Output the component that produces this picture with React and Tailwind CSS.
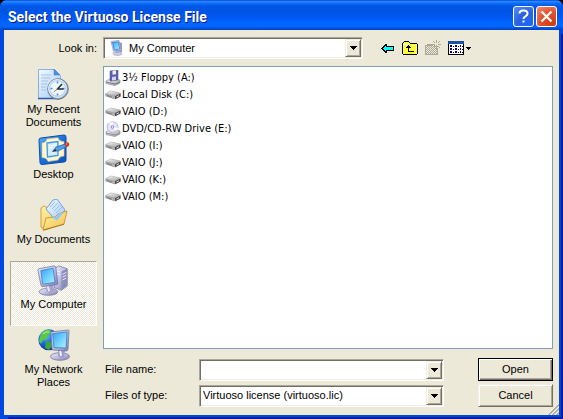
import React from "react";

const UI = "font-['Liberation_Sans',Arial,sans-serif] text-[11px] leading-[13px]";
const LIST = "font-['DejaVu_Sans_Condensed','DejaVu_Sans',Tahoma,sans-serif] text-[11px] leading-[17px]";

function Gradients() {
  return (
    <svg width="0" height="0" className="absolute" aria-hidden="true">
      <defs>
        <linearGradient id="screen" x1="0" y1="0" x2="1" y2="1">
          <stop offset="0" stopColor="#3c9cf4" />
          <stop offset="0.5" stopColor="#6cd0ff" />
          <stop offset="1" stopColor="#b8f0ff" />
        </linearGradient>
        <linearGradient id="case" x1="0" y1="0" x2="1" y2="1">
          <stop offset="0" stopColor="#eeeefc" />
          <stop offset="0.5" stopColor="#bcbce0" />
          <stop offset="1" stopColor="#7c7cb0" />
        </linearGradient>
        <linearGradient id="paper" x1="0" y1="0" x2="1" y2="1">
          <stop offset="0" stopColor="#f4faff" />
          <stop offset="1" stopColor="#a4c8f4" />
        </linearGradient>
        <linearGradient id="folder" x1="0" y1="0" x2="1" y2="1">
          <stop offset="0" stopColor="#fff4a8" />
          <stop offset="1" stopColor="#f4c048" />
        </linearGradient>
        <linearGradient id="frame" x1="0" y1="0" x2="1" y2="1">
          <stop offset="0" stopColor="#58b0f8" />
          <stop offset="0.5" stopColor="#1c70dc" />
          <stop offset="1" stopColor="#0a50b8" />
        </linearGradient>
        <radialGradient id="globe" cx="0.35" cy="0.3" r="0.75">
          <stop offset="0" stopColor="#70c0ff" />
          <stop offset="0.5" stopColor="#1c68e0" />
          <stop offset="1" stopColor="#0a2890" />
        </radialGradient>
        <linearGradient id="metal" x1="0" y1="0" x2="1" y2="1">
          <stop offset="0" stopColor="#fafafa" />
          <stop offset="1" stopColor="#a0a0a0" />
        </linearGradient>
      </defs>
    </svg>
  );
}

function RecentIcon() {
  return (
    <svg width="32" height="32" viewBox="0 0 32 32" aria-hidden="true">
      <path d="M0.500 0.500h16l6 6v23h-22z" fill="url(#paper)" stroke="#8cb0e4" />
      <path d="M0 29.500h22" stroke="#2c58a8" strokeWidth="1.500" />
      <path d="M16 0l6 6h-6z" fill="#4a90e8" stroke="#3c78d0" strokeWidth="0.5" />
      <path d="M3 6h10M3 9h9M3 12h7M3 15h6M3 18h5M3 21h5" stroke="#a4c4f0" />
      <circle cx="20" cy="20" r="10.300" fill="#8ca4bc" stroke="#6c8098" />
      <circle cx="19.500" cy="19.500" r="9" fill="#b8d0e8" stroke="#e8f0f8" />
      <circle cx="19.500" cy="19.500" r="7.300" fill="#eef8ff" />
      <path d="M19.500 12.500v2M19.500 24.500v2M12.500 19.500h2M24.500 19.500h2" stroke="#3890e0" strokeWidth="1.500" />
      <path d="M24 15l-4.500 5h6" stroke="#202838" strokeWidth="1.500" fill="none" />
      <path d="M19.500 20l-4 3" stroke="#e87828" />
    </svg>
  );
}

function DesktopIcon() {
  return (
    <svg width="32" height="32" viewBox="0 0 32 32" aria-hidden="true">
      <path d="M3 4l23-3q2 0 2 2v23q0 2-2 2L4 30.500q-2 0-2-2L1 6q0-2 2-2z" fill="url(#frame)" stroke="#0a50a8" />
      <path d="M4 9q4 0 5-4l11-1.300q1 4 6 4V22q-5 0-6 4L10 27.500q-1-4-6-4z" fill="#fff6cc" stroke="#e8c878" strokeWidth="0.6" />
      <path d="M9 9l11-1.500v14L9.500 23z" fill="#d4ecff" stroke="#3c98e8" strokeWidth="1.300" />
      <path d="M11 12l7-1M11 14l4-0.500" stroke="#fff" />
      <path d="M15 17l3-4 9-3 2 2.500-9 4.500z" fill="#4ca0ec" stroke="#1c58a8" strokeWidth="0.7" />
      <path d="M13.500 18l4-3 1 2z" fill="#303030" />
      <circle cx="29" cy="10.500" r="2.200" fill="#d03818" />
      <circle cx="28.500" cy="10" r="0.700" fill="#ff9878" />
    </svg>
  );
}

function DocumentsIcon() {
  return (
    <svg width="32" height="32" viewBox="0 0 32 32" aria-hidden="true">
      <path d="M3 9l3-2 4 2 2 3 14-1v13L7 31l-4-3z" fill="url(#folder)" stroke="#c88c20" strokeWidth="0.8" />
      <path d="M8 10L15 1l4-1 8 11-9 11z" fill="url(#paper)" stroke="#6ca4e4" />
      <path d="M12 8l5-5M14 10l6-6M16 12l6-6M18 14l6-6" stroke="#94c0f4" />
      <path d="M5 31l3-12 9-1 3-3 9-3-3 13z" fill="url(#folder)" stroke="#c88c20" strokeWidth="0.8" />
      <path d="M14 18.500l4-1 3-2.700 5-1.500-7 8.500z" fill="#94c8f8" />
      <path d="M5 31.300l21-6" stroke="#a06c10" strokeWidth="0.7" />
    </svg>
  );
}

function ComputerIcon() {
  return (
    <svg width="34" height="32" viewBox="0 -2 34 34" aria-hidden="true">
      <path d="M17 3l5-3 9 3v18l-6 5-8-3z" fill="url(#case)" stroke="#7272a0" strokeWidth="0.8" />
      <path d="M25 6l6-3v18l-6 5z" fill="#8c8cbc" />
      <path d="M19 5l5 1.500M19 8l5 1.500M26 9l4-2M26 12l4-2M26 15l4-2" stroke="#f4f4ff" />
      <circle cx="27.500" cy="18" r="1" fill="#50d050" />
      <ellipse cx="11" cy="27.500" rx="10" ry="3.800" fill="url(#case)" stroke="#7878a0" strokeWidth="0.8" />
      <path d="M8 20l8-1 1 8q-4 3-8 0z" fill="#a4a4cc" />
      <path d="M10 21l2 6" stroke="#ececff" strokeWidth="2" />
      <path d="M1 3l16-3q2 0 2 2l2 16q0 2-2 2L5 22q-2 0-2-2L0 5q0-2 1-2z" fill="url(#case)" stroke="#7272a0" strokeWidth="0.8" />
      <path d="M3 5l13-2.500 2 15L5 19.500z" fill="url(#screen)" stroke="#2c74c8" strokeWidth="0.7" />
    </svg>
  );
}

function NetworkIcon() {
  return (
    <svg width="32" height="32" viewBox="0 0 32 32" aria-hidden="true">
      <circle cx="10.800" cy="10.800" r="10.500" fill="url(#globe)" />
      <path d="M3 5q4-5 9-4l2 3-4 2-1 4-4 1-2 4-2-3z" fill="#58c848" />
      <path d="M8 12l5 1 1 4-3 4-4-2z" fill="#38a838" />
      <path d="M5 5l3-2 3 0" stroke="#c0f0a0" fill="none" />
      <ellipse cx="22" cy="27.500" rx="9.500" ry="3.800" fill="url(#case)" stroke="#7878a0" strokeWidth="0.8" />
      <path d="M20 19l7 1-1 8q-4 2-6-1z" fill="#9c9cc8" />
      <path d="M22 20l1 7" stroke="#f0f0ff" strokeWidth="2" />
      <path d="M13 3l17-2q1 0 1 1l-1 18q0 2-2 2l-13-1q-1 0-1-1z" fill="url(#case)" stroke="#6c78a0" strokeWidth="0.8" />
      <path d="M14.500 4.500L29 3l-1 16-12-0.500z" fill="url(#screen)" stroke="#2c74c8" strokeWidth="0.7" />
    </svg>
  );
}

function SmallComputerIcon() {
  return (
    <svg width="16" height="16" viewBox="0 0 16 16" aria-hidden="true" className="shrink-0">
      <path d="M10 2l3 1v9l-3 2z" fill="#9c9cc4" />
      <ellipse cx="8.500" cy="13.500" rx="4.500" ry="1.900" fill="#d0d0e4" stroke="#9494b4" strokeWidth="0.6" />
      <path d="M6 10h4v3H7z" fill="#a8a8cc" />
      <path d="M2 1.500L10 0.500 12 10 4.500 11z" fill="#e4e4f6" stroke="#8c94c0" strokeWidth="0.8" />
      <path d="M3.500 2.500L9.200 1.800 10.800 9 5.300 9.800z" fill="url(#screen)" stroke="#2070d0" strokeWidth="0.7" />
    </svg>
  );
}

function DiskIcon() {
  return (
    <svg width="16" height="16" viewBox="0 1 16 16" aria-hidden="true">
      <path d="M0.500 7.500L6 5l9.500 2v3.500L10 13.300 0.500 10z" fill="#8c8c8c" />
      <path d="M0.500 7.500L6 4.800l9.500 2.400L10 10z" fill="url(#metal)" stroke="#b4b4b4" strokeWidth="0.5" />
      <path d="M0.500 8L10 10.500v2.800L0.500 10.200z" fill="#b0b0b0" />
      <path d="M10 10.300l5.500-2.900v3L10 13.300z" fill="#484848" />
      <path d="M2 9.500l5 1.700" stroke="#787878" />
      <path d="M11.500 11l2.500-1.300" stroke="#d8e8d8" />
    </svg>
  );
}

function FloppyIcon() {
  return (
    <svg width="16" height="16" viewBox="0 0 16 16" aria-hidden="true">
      <path d="M1 11l4-2 10 1v3l-5 2.500L1 13.500z" fill="url(#metal)" stroke="#808080" strokeWidth="0.6" />
      <path d="M1 12l9 2 5-2" stroke="#787878" fill="none" />
      <path d="M5 1l8-1v10l-8 1z" fill="#5c60b4" stroke="#44488c" strokeWidth="0.5" />
      <path d="M7.500 0.700l3.500-0.400v4l-3.500 0.500z" fill="#f0f0fc" />
      <path d="M7 7l4-0.500v3.500l-4 0.500z" fill="#d0d4f0" />
      <rect x="12" y="12" width="1" height="1" fill="#40c040" />
    </svg>
  );
}

function DvdIcon() {
  return (
    <svg width="16" height="16" viewBox="0 0 16 16" aria-hidden="true">
      <path d="M1 11l4-2.500 10 1.500v3l-5 2.500-9-2z" fill="url(#metal)" stroke="#808080" strokeWidth="0.6" />
      <path d="M1 12l9 2 5-2" stroke="#909090" fill="none" />
      <ellipse cx="7.500" cy="6" rx="5.500" ry="5.300" fill="#e4e4f8" stroke="#a4a4c4" strokeWidth="0.7" />
      <path d="M7.500 6L4 1.800A5.500 5 0 0 1 8 1zM7.500 6l3.500 4a5.500 5 0 0 0 2-3z" fill="#fff" />
      <circle cx="7.500" cy="6" r="1.700" fill="#8c8ce4" />
      <circle cx="7.500" cy="6" r="0.7" fill="#fff" />
    </svg>
  );
}

const SUNKEN =
  "flex bg-white border border-t-[#aca899] border-l-[#aca899] border-b-white border-r-white shadow-[inset_1px_1px_0_#716f64,inset_-1px_-1px_0_#f1efe2]";
const RAISED =
  "bg-[#ece9d8] border border-t-[#f1efe2] border-l-[#f1efe2] border-b-[#716f64] border-r-[#716f64] shadow-[inset_1px_1px_0_#fff,inset_-1px_-1px_0_#aca899]";

function Arrow() {
  return (
    <svg width="7" height="4" viewBox="0 0 7 4" shapeRendering="crispEdges" aria-hidden="true">
      <path d="M0 0h7v1H0zM1 1h5v1H1zM2 2h3v1H2zM3 3h1v1H3z" fill="#000" />
    </svg>
  );
}

function ArrowBox() {
  return (
    <span className={`pointer-events-none col-start-2 row-start-1 flex items-center justify-center ${RAISED}`}>
      <Arrow />
    </span>
  );
}

function SelectBox({ id, option, icon, className }) {
  return (
    <div className={`${SUNKEN} h-[22px] p-px ${className}`}>
      <div className="grid min-w-0 flex-1 grid-cols-[1fr_16px] items-stretch">
        <div className="col-span-2 col-start-1 row-start-1 flex min-w-0 items-center">
          {icon}
          <select id={id} className={`h-full min-w-0 flex-1 appearance-none bg-transparent px-0.5 text-black outline-none ${icon ? "ml-0.5" : ""}`}>
            <option>{option}</option>
          </select>
        </div>
        <ArrowBox />
      </div>
    </div>
  );
}

const places = [
  { lines: ["My Recent", "Documents"], Icon: RecentIcon },
  { lines: ["Desktop"], Icon: DesktopIcon },
  { lines: ["My Documents"], Icon: DocumentsIcon },
  { lines: ["My Computer"], Icon: ComputerIcon, active: true },
  { lines: ["My Network", "Places"], Icon: NetworkIcon },
];

const drives = [
  { name: "3½ Floppy (A:)", Icon: FloppyIcon },
  { name: "Local Disk (C:)", Icon: DiskIcon },
  { name: "VAIO (D:)", Icon: DiskIcon },
  { name: "DVD/CD-RW Drive (E:)", Icon: DvdIcon },
  { name: "VAIO (I:)", Icon: DiskIcon },
  { name: "VAIO (J:)", Icon: DiskIcon },
  { name: "VAIO (K:)", Icon: DiskIcon },
  { name: "VAIO (M:)", Icon: DiskIcon },
];

function TitleBar() {
  return (
    <header className="flex h-[30px] shrink-0 items-center gap-0.5 rounded-t-[7px] bg-[linear-gradient(180deg,#0048d8_0%,#2a86ff_5%,#0a6cf8_12%,#0058e8_20%,#0054e3_35%,#0058f0_56%,#0066ff_76%,#0066ff_88%,#004fd8_95%,#0040c0_100%)] pt-[3px] pr-1.5 pl-2">
      <h1 className="min-w-0 flex-1 truncate font-['Roboto','Noto_Sans',sans-serif] text-[14px] leading-[20px] font-bold text-white [text-shadow:1px_1px_0_#0a1883]">
        Select the Virtuoso License File
      </h1>
      <button type="button" aria-label="Help" className="flex size-[21px] items-center justify-center rounded-[3px] border border-white bg-[radial-gradient(circle_at_80%_90%,#1c68f8_0%,#2c62e0_50%,#5c8cf0_100%)]">
        <svg width="15" height="15" viewBox="0 0 15 15" aria-hidden="true">
          <path d="M3.500 4.500q0-3 4-3t4 3q0 1.500-2 2.800-2 1-2 2.700" fill="none" stroke="#fff" strokeWidth="2" />
          <path d="M6.500 11.500h2v2h-2z" fill="#fff" />
        </svg>
      </button>
      <button type="button" aria-label="Close" className="flex size-[21px] items-center justify-center rounded-[3px] border border-white bg-[radial-gradient(circle_at_80%_90%,#d03c10_0%,#e0502c_50%,#f08c70_100%)]">
        <svg width="15" height="15" viewBox="0 0 15 15" aria-hidden="true">
          <path d="M2.500 2.500l10 10M12.500 2.500l-10 10" stroke="#fff" strokeWidth="2.200" />
        </svg>
      </button>
    </header>
  );
}

function Toolbar() {
  return (
    <div className="flex items-center gap-[7px]">
      <button type="button" aria-label="Back" className="flex size-4 items-center justify-center">
        <svg width="13" height="9" viewBox="0 0 13 9" shapeRendering="crispEdges" aria-hidden="true">
          <path d="M4 0h2v2h7v5H6v2H4V8H3V7H2V6H1V5H0V4h1V3h1V2h1V1h1z" fill="#000" />
          <path d="M4 2h1v1h7v3H5v1H4V6H3V5H2V4h1V3h1z" fill="#00ffff" />
        </svg>
      </button>
      <button type="button" aria-label="Up one level" className="flex size-4 items-center justify-center">
        <svg width="16" height="14" viewBox="0 0 16 14" shapeRendering="crispEdges" aria-hidden="true">
          <path d="M2 0h5v1h1v1h7v1h1v10h-1v1H1v-1H0V2h1V1h1z" fill="#000" />
          <path d="M2 1h5v1h1v1h7v10H1V2h1z" fill="#ffff40" />
          <path d="M1 3h6v1H1z" fill="#fff" />
          <path d="M6 4h1v1h1v1h1v1H7v3h5v1H6V7H4V6h1V5h1z" fill="#000" />
        </svg>
      </button>
      <button type="button" aria-label="Create new folder" disabled className="flex size-4 items-center justify-center">
        <svg width="16" height="16" viewBox="0 0 16 16" shapeRendering="crispEdges" aria-hidden="true">
          <defs>
            <pattern id="dither" width="2" height="2" patternUnits="userSpaceOnUse">
              <path d="M0 0h1v1H0zM1 1h1v1H1z" fill="#aca899" />
            </pattern>
          </defs>
          <path d="M1 5h2V4h4v1h6v10H1z" fill="url(#dither)" />
          <path d="M0 5h1v10H0zM0 14h12v1H0zM12 8h1v7h-1zM1 5h6v1H1zM2 4h4v1H2z" fill="#aca899" />
          <path d="M11 0h1v3h-1zM11 6h1v3h-1zM7 4h3v1H7zM13 4h3v1h-3zM8 1h1v1H8zM9 2h1v1H9zM14 1h1v1h-1zM13 2h1v1h-1zM14 7h1v1h-1zM13 6h1v1h-1zM9 6h1v1H9z" fill="#aca899" />
        </svg>
      </button>
      <button type="button" aria-label="View menu" className="flex h-4 items-center gap-0.5">
        <svg width="16" height="14" viewBox="0 0 16 14" shapeRendering="crispEdges" aria-hidden="true">
          <path d="M0 0h16v14H0z" fill="#000" />
          <path d="M0 0h16v3H0z" fill="#1c50a8" />
          <path d="M1 3h14v10H1z" fill="#fff" />
          <path d="M2 4h2v2H2zM7 4h2v2H7zM12 4h1v2h-1zM2 7h2v2H2zM7 7h2v2H7zM12 7h1v2h-1zM2 10h2v2H2zM7 10h2v2H7zM12 10h1v2h-1z" fill="#000080" />
          <path d="M5 5h1v1H5zM10 5h1v1h-1zM14 5h1v1h-1zM5 8h1v1H5zM10 8h1v1h-1zM14 8h1v1h-1zM5 11h1v1H5zM10 11h1v1h-1zM14 11h1v1h-1z" fill="#000" />
        </svg>
        <svg width="5" height="3" viewBox="0 0 5 3" shapeRendering="crispEdges" aria-hidden="true">
          <path d="M0 0h5v1H0zM1 1h3v1H1zM2 2h1v1H2z" fill="#000" />
        </svg>
      </button>
    </div>
  );
}

function PlacesBar() {
  return (
    <nav aria-label="Places" className="flex flex-col">
      {places.map(({ lines, Icon, active }) => (
        <button
          key={lines[0]}
          type="button"
          aria-pressed={!!active}
          className={`flex h-[65px] flex-col items-center border pt-0.5 text-center ${
            active
              ? "border-t-[#aca899] border-r-white border-b-white border-l-[#aca899] bg-[repeating-conic-gradient(#ffffff_0_25%,#ece9d8_0_50%)] bg-[length:2px_2px]"
              : "border-transparent"
          }`}
        >
          <span className="mb-0.5 shrink-0"><Icon /></span>
          {lines.map((line) => (
            <span key={line}>{line}</span>
          ))}
        </button>
      ))}
    </nav>
  );
}

export default function App() {
  return (
    <div className="bg-black">
      <Gradients />
      <main className={`flex min-h-screen flex-col rounded-t-[7px] bg-[#0046e0] text-black ${UI}`}>
        <TitleBar />
        <form
          onSubmit={(e) => e.preventDefault()}
          className="relative mx-1 mb-1 grid flex-1 grid-cols-[87px_1fr] grid-rows-[auto_1fr] gap-x-1.5 gap-y-[7px] bg-[#ece9d8] px-1.5 pt-[7px] pb-2 shadow-[2px_2px_0_#0046e0,4px_4px_0_#001ea0]"
        >
          <label htmlFor="look-in" className="self-center text-right">Look in:</label>
          <div className="flex items-center gap-4">
            <SelectBox id="look-in" option="My Computer" icon={<span className="ml-1"><SmallComputerIcon /></span>} className="min-w-0 max-w-[260px] flex-1" />
            <Toolbar />
          </div>
          <PlacesBar />
          <div className="flex min-w-0 flex-col gap-[9px]">
            <ul className={`flex-1 border border-[#7f9db9] bg-white px-px py-0.5 ${LIST}`}>
              {drives.map(({ name, Icon }) => (
                <li key={name} className="flex h-[17px] items-center gap-px">
                  <Icon />
                  <span>{name}</span>
                </li>
              ))}
            </ul>
            <div className="grid grid-cols-[88px_1fr_75px] items-center gap-x-2 gap-y-[3px]">
              <label htmlFor="file-name" className="pl-0.5">File name:</label>
              <div className={`${SUNKEN} mr-[26px] h-[22px] p-px`}>
                <input id="file-name" type="text" className="min-w-0 flex-1 bg-transparent px-0.5 outline-none" />
                <button type="button" aria-label="Recent file names" className={`flex w-4 items-center justify-center ${RAISED}`}>
                  <Arrow />
                </button>
              </div>
              <button type="submit" className="h-[23px] border border-black bg-[#ece9d8] shadow-[inset_1px_1px_0_#fff,inset_-1px_-1px_0_#716f64,inset_-2px_-2px_0_#aca899]">
                Open
              </button>
              <label htmlFor="file-type" className="pl-0.5">Files of type:</label>
              <SelectBox id="file-type" option="Virtuoso license (virtuoso.lic)" className="mr-[26px]" />
              <button type="button" className={`h-[23px] ${RAISED}`}>Cancel</button>
            </div>
          </div>
          <svg width="12" height="12" viewBox="0 0 12 12" className="absolute right-0 bottom-0" aria-hidden="true">
            <path d="M0 12L12 0M4 12l8-8M8 12l4-4" stroke="#fff" strokeWidth="1" />
            <path d="M1.500 12L12 1.500M5.500 12L12 5.500M9.500 12L12 9.500" stroke="#aca899" strokeWidth="1.600" />
          </svg>
        </form>
      </main>
    </div>
  );
}
